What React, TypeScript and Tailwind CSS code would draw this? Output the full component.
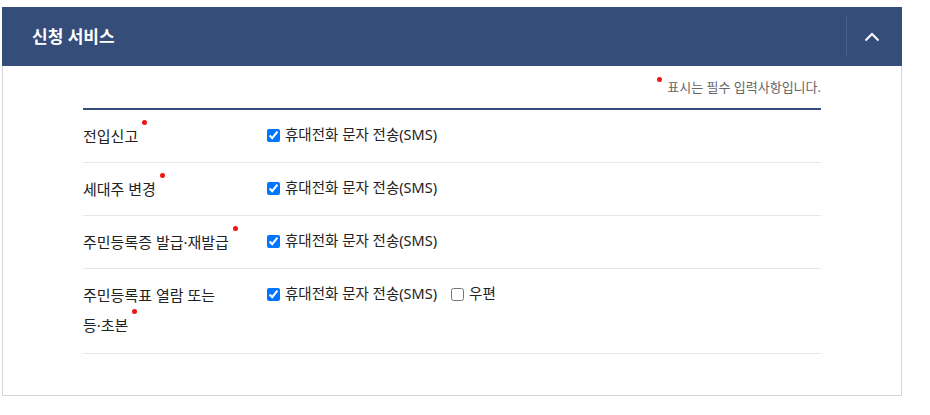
import React from 'react'

const rows = [
  { label: '전입신고', tail: '', post: false },
  { label: '세대주 변경', tail: '', post: false },
  { label: '주민등록증 발급·재발급', tail: '', post: false },
  { label: '주민등록표 열람 또는 ', tail: '등·초본', post: true },
]

function Dot({ className = '' }: { className?: string }) {
  return <span className={`relative -top-px inline-block h-[5px] w-[5px] rounded-full bg-[#f01414] align-top ${className}`} />
}

export default function App() {
  return (
    <div className="w-[902px] pl-[2px] pt-[7px] font-['Noto_Sans','Noto_Sans_CJK_KR',sans-serif] text-[#222]">
      <div className="flex h-[59px] items-center justify-between bg-[#344d79] pl-[30px]">
        <h2 className="text-[17px] font-bold text-white">신청 서비스</h2>
        <div className="flex items-center">
          <span className="h-[40px] w-px bg-[#4b6290]" />
          <button className="flex h-[40px] w-[55px] items-center justify-center pr-[5px]">
            <svg width="16" height="10" viewBox="0 0 16 10" fill="none">
              <polyline points="1.5,8.5 8,2 14.5,8.5" stroke="#fff" strokeWidth="2" />
            </svg>
          </button>
        </div>
      </div>

      <div className="border-x border-b border-[#d6d6d6] px-20 pb-[41px]">
        <p className="pt-[11px] text-right text-[13px] leading-[20px] text-[#666]">
          <Dot className="mr-[5px] top-0" />
          표시는 필수 입력사항입니다.
        </p>
        <div className="mt-[11px] border-t-2 border-[#344d79]">
          {rows.map(r => (
            <div key={r.label} className={`flex border-b border-[#e8e8e8] pt-[11px] ${r.post ? 'pb-[13px]' : 'pb-[11px]'}`}>
              <div className="w-[184px] shrink-0 break-keep pr-[24px] text-[15px] leading-[30px]">
                {r.label}
                {r.tail && <span className="whitespace-nowrap">{r.tail}</span>}
                <Dot className="ml-[4px]" />
              </div>
              <div className="flex h-[28px] items-center gap-[14px] text-[14.5px]">
                <label className="flex items-center gap-[5px]">
                  <input type="checkbox" defaultChecked className="m-0 h-[13px] w-[13px]" />
                  휴대전화 문자 전송(SMS)
                </label>
                {r.post && (
                  <label className="flex items-center gap-[5px]">
                    <input type="checkbox" className="m-0 h-[13px] w-[13px]" />
                    우편
                  </label>
                )}
              </div>
            </div>
          ))}
        </div>
      </div>
    </div>
  )
}
